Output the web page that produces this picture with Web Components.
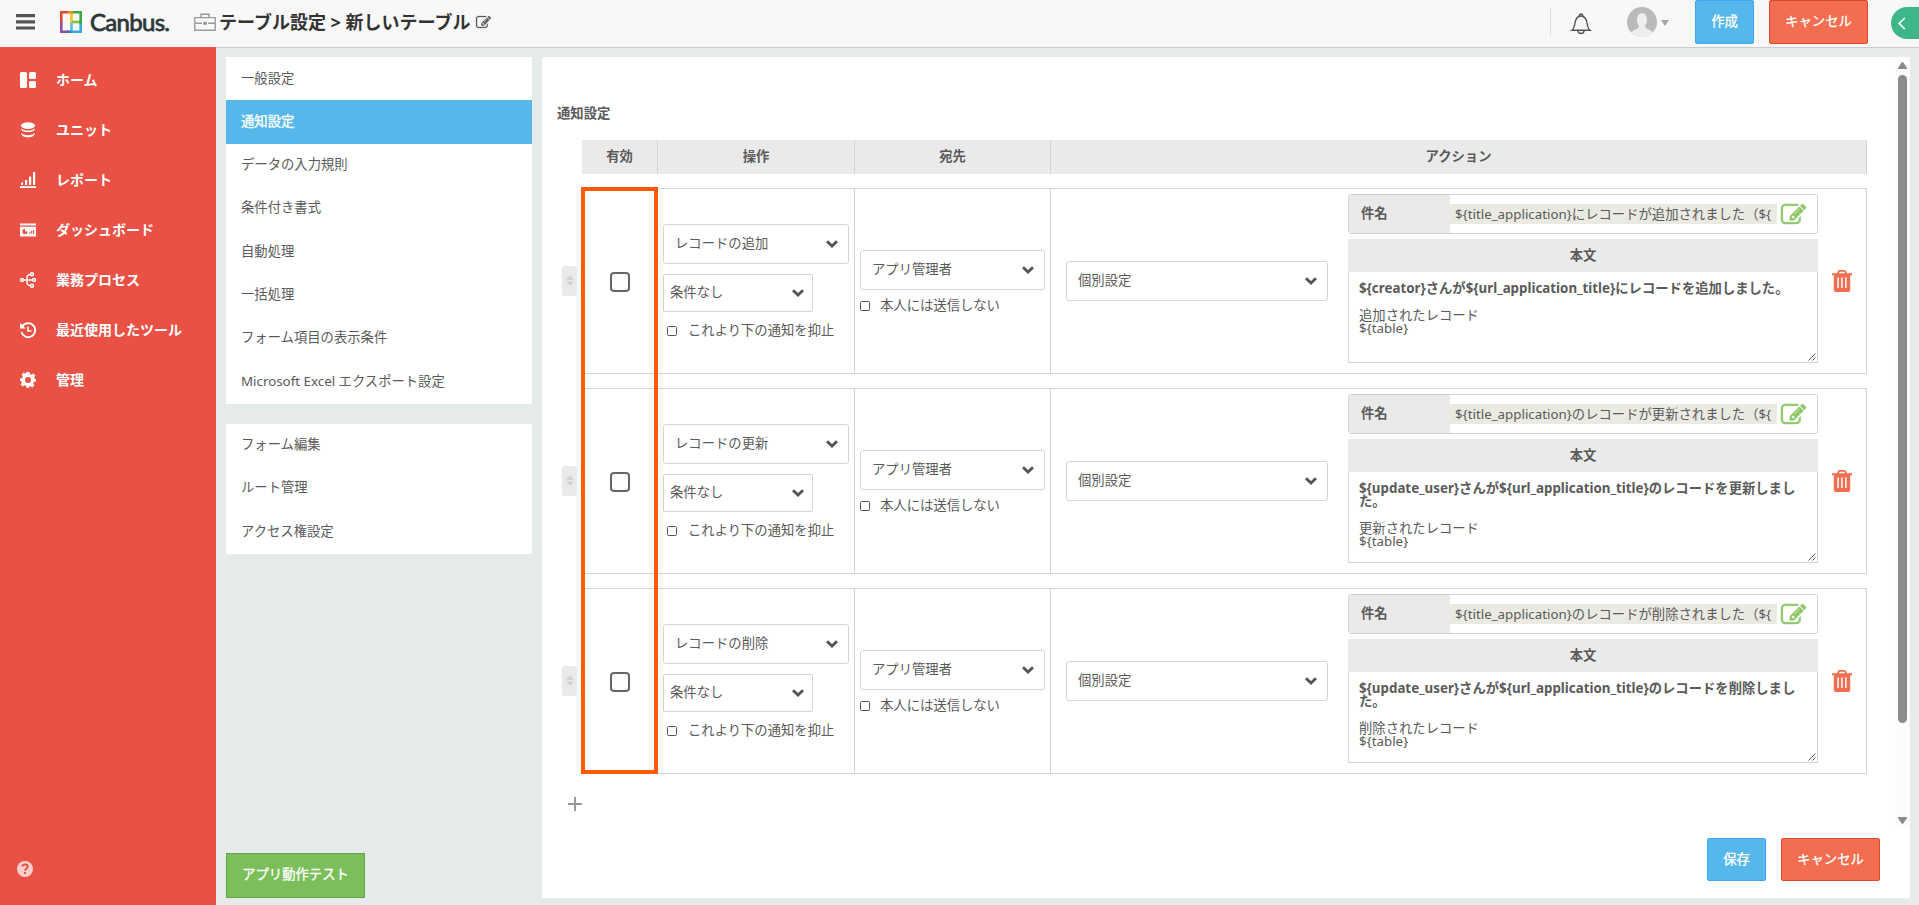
<!DOCTYPE html>
<html lang="ja">
<head>
<meta charset="utf-8">
<title>テーブル設定 - Canbus.</title>
<style>
  html, body { height: 100%; margin: 0; }
  body {
    --color-red: #e95145;
    --color-blue: #55b7ea;
    --color-blue-border: #3ea6f2;
    --color-orange: #f36d50;
    --color-orange-border: #dc4c2c;
    --color-green: #7bbf5a;
    --color-border: #d3d3d3;
    --color-gray: #eaeaea;
    --color-bg: #e5ebea;
    overflow: hidden;
    color: #5a5a5a;
    font-family: "Noto Sans", "Noto Sans CJK JP", sans-serif;
    font-size: 13.333px;
    line-height: 1;
  }
</style>
</head>
<body>
<canbus-app></canbus-app>

<script>
const icons = {
  menu: ['0 0 19 16', '<path fill="#555" d="M0 0h19v3.2H0zM0 6.2h19v3.2H0zM0 12.4h19v3.2H0z"/>'],
  logo: ['0 0 22 22', `
    <g fill="none" stroke-width="2.6">
      <path stroke="#59b9e6" d="M11.500 11v9.500"/>
      <path stroke="#f3c220" d="M11.500 1.300V12"/>
      <path stroke="#84c241" d="M12 11h8"/>
      <path stroke="#e8452f" d="M1.300 12V1.300H9"/>
      <path stroke="#f08a24" d="M8 1.300h5"/>
      <path stroke="#8c4fa0" d="M1.300 11v9.700H8"/>
      <path stroke="#4a6fc0" d="M7 20.700h5"/>
      <path stroke="#37a9e0" d="M11 20.700h9.700V12"/>
      <path stroke="#3aa845" d="M13 1.300h7.700V13"/>
    </g>`],
  toolbox: ['0 0 22 18', `
    <g fill="none" stroke="#999" stroke-width="1.4">
      <path d="M7 4V1.2h8V4M.8 10V4.6h20.4V10M.8 10.2V17.300h20.400v-7.100M.8 10.200H8M14 10.200h7.200"/>
    </g><path fill="#999" d="M9.300 8.800h3.600v3H9.300z"/>`],
  pencilbox: ['0 0 1792 1408', '<path fill="currentColor" stroke="currentColor" stroke-width="30" d="M888 1056l116-116-152-152-116 116v56h96v96h56zm440-720q-16-16-33 1L945 687q-17 17-1 33t33-1l350-350q17-17 1-33zm80 594v190q0 119-84.500 203.500T1120 1408H288q-119 0-203.500-84.500T0 1120V288Q0 169 84.500 84.500T288 0h832q63 0 117 25 15 7 18 23 3 17-9 29l-49 49q-14 14-32 8-23-6-45-6H288q-66 0-113 47t-47 113v832q0 66 47 113t113 47h832q66 0 113-47t47-113V994q0-13 9-22l64-64q15-15 35-7t20 29zM1312 192l288 288-672 672H640V864zm444 132l-92 92-288-288 92-92q28-28 68-28t68 28l152 152q28 28 28 68t-28 68z"/>'],
  bell: ['0 0 20 22', '<g fill="none" stroke="#555" stroke-width="1.400"><path d="M.9 17.300C3 15.700 3.400 13.500 3.900 10.500 4.500 6.300 6.500 3 10 3s5.500 3.300 6.100 7.500c.5 3 .9 5.200 3 6.800z"/><path d="M8.300 3c0-2.600 3.400-2.600 3.400 0M6.900 17.500c0 4 6.200 4 6.200 0"/></g>'],
  avatar: ['0 0 30 30', '<circle cx="15" cy="15" r="15" fill="#bababa"/><path fill="#eee" d="M4.500 25.700c1-3 6.500-3.600 7.200-5.200.300-.8 0-2.300-.7-3.500-1.500-2.500-2.100-10.700 4-10.700s5.500 8.200 4 10.700c-.7 1.200-1 2.700-.7 3.500.7 1.600 6.200 2.200 7.200 5.200a15 15 0 0 1-21 0z"/>'],
  caret: ['0 0 8 6', '<path fill="#a5a5a5" d="M0 0h8L4 6z"/>'],
  back: ['0 0 8 13', '<path fill="none" stroke="#fff" stroke-width="1.600" d="M6.800 1L1.200 6.500 6.800 12"/>'],
  home: ['0 0 16 16', '<g fill="#fff"><rect width="7" height="16" rx="1.500"/><rect x="9" width="7" height="7" rx="1.500"/><rect x="9" y="9" width="7" height="7" rx="1.500"/></g>'],
  unit: ['0 0 16 16', '<g fill="#fff"><ellipse cx="8" cy="3.600" rx="7" ry="3.400"/><path d="M1 6.200c2.500 3.200 11.500 3.200 14 0 .2 5.200-14.200 5.200-14 0zM1 10.800c2.500 3.200 11.500 3.200 14 0 .2 6.200-14.200 6.200-14 0z"/></g>'],
  report: ['0 0 16 16', '<path fill="#fff" d="M0 14.200h16V16H0zM1 10.500h2.200V13H1zM5 8h2.200v5H5zM9 4.500h2.200V13H9zM13 0h2.200v13H13z"/>'],
  dashboard: ['0 0 16 16', '<path fill="#fff" d="M0 1.500h16v2H0zM0 4.800h16V14.500H0z"/><g fill="#e95145"><path d="M5 6.800a2.600 2.600 0 1 0 2.600 2.600H5z"/><path d="M9.300 9.700h1.100v2H9.300zM11.100 8.700h1.100v3h-1.100zM13 8h1.100v3.700H13z"/></g>'],
  process: ['0 0 16 16', '<g fill="none" stroke="#fff" stroke-width="1.500"><circle cx="2" cy="8" r="1.400"/><circle cx="12" cy="2.200" r="1.500"/><circle cx="14" cy="8" r="1.400"/><circle cx="12" cy="13.800" r="1.500"/><path d="M3.500 8h9M10.500 2.500C7 2.500 7 4 7 8s0 5.500 3.500 5.500"/></g>'],
  history: ['0 0 16 16', '<g fill="none" stroke="#fff" stroke-width="1.900"><path d="M2.200 4.500A7 7 0 1 1 1.400 10"/><path stroke-width="1.600" d="M8 4.500V9h3.500"/></g><path fill="#fff" d="M0 .8v5.700h5.700z"/>'],
  gear: ['0 0 16 16', '<path fill="#fff" fill-rule="evenodd" d="M6.500 0h3l.5 2.200 1.400.6 1.900-1.200 2.100 2.100-1.200 1.900.6 1.400L16 7v2.500l-2.200.500-.6 1.400 1.200 1.900-2.100 2.100-1.900-1.200-1.400.6L8.500 16h-2L6 13.800l-1.400-.6-1.900 1.200L.6 12.300l1.200-1.900L1.200 9 0 8.800V6.500L2.200 6l.6-1.400L1.600 2.700 3.700.6l1.900 1.200zM8 5a3 3 0 1 0 0 6 3 3 0 0 0 0-6z"/>'],
  help: ['0 0 16 16', '<circle cx="8" cy="8" r="8" fill="#fbd0cc"/><path fill="none" stroke="#e95145" stroke-width="2" d="M5.300 5.500c.3-2.600 5.400-2.500 5.400.2C10.700 7.500 8 7.600 8 9.700"/><path fill="#e95145" d="M7 11h2v2H7z"/>'],
  chevron: ['0 0 12 8', '<path fill="none" stroke="#555" stroke-width="2.900" d="M1 1.300l5 4.700 5-4.700"/>'],
  sort: ['0 0 8 12', '<path fill="#d3d3d3" d="M0 5h8L4 .600zM0 6.500h8L4 11z"/>'],
  trash: ['0 0 20 22', '<path fill="#f36d50" fill-rule="evenodd" d="M5 3.300L6 1q.4-1 1.500-1h5Q13.600 0 14 1l1 2.300h5v1.900h-1.800V19.500q0 2.500-2 2.500H3.800q-2 0-2-2.500V5.200H0V3.300zm2 0h6l-.7-1.500H7.700zM5.300 7.500V18h1.500V7.500zm3.900 0V18h1.500V7.500zm3.900 0V18h1.500V7.500z"/>'],
  plus: ['0 0 14 14', '<path fill="#999" d="M6 0h2v6h6v2H8v6H6V8H0V6h6z"/>'],
  grip: ['0 0 8 8', '<path stroke="#555" stroke-width="1" d="M.5 7.500l7-7M4.500 7.500l3-3"/>'],
  up: ['0 0 9 7', '<path fill="#8b8b8b" d="M4.500 0q.5 0 1 .7L9 6v1H0V6L3.500.7q.5-.7 1-.7z"/>'],
  down: ['0 0 9 7', '<path fill="#8b8b8b" d="M4.500 7q-.5 0-1-.7L0 1V0h9v1L5.500 6.300q-.5.7-1 .7z"/>'],
};

/* Attaches an open root and fills it from a template */
class BaseElement extends HTMLElement {
  constructor() {
    super();
    this.attachShadow({ mode: 'open' });
  }

  connectedCallback() {
    const tpl = document.createElement('template');
    tpl.innerHTML = `<style>* { box-sizing: border-box; }</style>${this.render()}`;
    this.shadowRoot.replaceChildren(tpl.content.cloneNode(true));
  }

  attr(name, fallback = '') {
    return this.getAttribute(name) ?? fallback;
  }
}

/* <cb-icon name w h> */
class CbIcon extends BaseElement {
  render() {
    const [viewBox, body] = icons[this.attr('name')];
    return `
      <style>
        :host { display: block; flex: none; width: ${this.attr('w')}px; height: ${this.attr('h')}px; }
        svg { display: block; width: 100%; height: 100%; overflow: visible; }
      </style>
      <svg viewBox="${viewBox}" preserveAspectRatio="none">${body}</svg>
    `;
  }
}

/* <cb-button kind="primary | danger | test"> */
class CbButton extends BaseElement {
  render() {
    return `
      <style>
        :host { display: block; flex: none; }
        button {
          display: block;
          width: 59px;
          height: 43px;
          padding: 0;
          border: 1px solid var(--color-blue-border);
          border-radius: 2px;
          background: var(--color-blue);
          color: #fff;
          font: inherit;
          -webkit-text-stroke: .3px #fff;
        }
        :host([tall]) button { height: 44px; }
        :host([kind=danger]) button {
          width: 99px;
          border-color: var(--color-orange-border);
          background: var(--color-orange);
        }
        :host([kind=test]) button {
          width: 139px;
          height: 45px;
          padding-bottom: 2px;
          border-color: #62a544;
          border-radius: 0;
          background: var(--color-green);
        }
      </style>
      <button><slot></slot></button>
    `;
  }
}

class CbSelect extends BaseElement {
  render() {
    return `
      <style>
        :host {
          display: flex;
          align-items: center;
          justify-content: space-between;
          box-sizing: border-box;
          height: 40px;
          padding: 0 10.500px 0 11px;
          border: 1px solid var(--color-border);
          border-radius: 3px;
          background: #fff;
        }
        :host([small]) { width: 150px; height: 38px; padding: 0 8.500px 0 6px; border-radius: 2px; }
      </style>
      <slot></slot>
      <cb-icon name="chevron" w="12" h="8"></cb-icon>
    `;
  }
}

class CbCheck extends BaseElement {
  render() {
    return `
      <style>
        :host { display: flex; align-items: center; gap: 10px; height: 18px; white-space: nowrap; }
        i { width: 10px; height: 10px; border: 1px solid #555; border-radius: 1.500px; }
        :host([large]) i { width: 20px; height: 20px; border: 2px solid #666; border-radius: 4px; }
      </style>
      <i></i><slot></slot>
    `;
  }
}

class AppHeader extends BaseElement {
  render() {
    return `
      <style>
        :host { display: flex; height: 47px; background: #f8f8f8; }
        .left { display: flex; align-items: center; flex: 1; height: 44px; padding-left: 16px; }
        .logo { display: flex; align-items: center; gap: 8px; margin: 0 25px; }
        .brand {
          width: 79px;
          color: #2d383b;
          font: 24px/30px Lato, sans-serif;
          letter-spacing: -.7px;
          -webkit-text-stroke: .8px #2d383b;
          white-space: nowrap;
        }
        h1 { margin: 0 5px 0 3px; color: #333; font-size: 18px; font-weight: 700; line-height: 24px; white-space: nowrap; }
        .right { display: flex; align-items: flex-start; }
        .sep { width: 1px; height: 28px; margin: 8px 20px 0 0; background: #ddd; }
        .bell { margin: 13px 36px 0 0; }
        .avatar { margin: 7px 4px 0 0; }
        .caret { margin: 20px 26px 0 0; }
        cb-button + cb-button { margin: 0 23px 0 15px; }
        .tab {
          display: flex;
          align-items: center;
          width: 28px;
          height: 32px;
          margin-top: 7px;
          padding-left: 7px;
          border-radius: 16px 0 0 16px;
          background: #3db788;
        }
      </style>
      <div class="left">
        <cb-icon name="menu" w="19" h="16"></cb-icon>
        <div class="logo"><cb-icon name="logo" w="22" h="22"></cb-icon><span class="brand">Canbus.</span></div>
        <cb-icon name="toolbox" w="22" h="18"></cb-icon>
        <h1>テーブル設定 &gt; 新しいテーブル</h1>
        <cb-icon name="pencilbox" w="15" h="12"></cb-icon>
      </div>
      <div class="right">
        <div class="sep"></div>
        <cb-icon class="bell" name="bell" w="20" h="22"></cb-icon>
        <cb-icon class="avatar" name="avatar" w="30" h="30"></cb-icon>
        <cb-icon class="caret" name="caret" w="8" h="6"></cb-icon>
        <cb-button tall>作成</cb-button>
        <cb-button tall kind="danger">キャンセル</cb-button>
        <div class="tab"><cb-icon name="back" w="8" h="13"></cb-icon></div>
      </div>
    `;
  }
}

class NavItem extends BaseElement {
  render() {
    return `
      <style>
        :host { display: flex; align-items: center; gap: 20px; height: 50px; padding-left: 20px; white-space: nowrap; }
      </style>
      <cb-icon name="${this.attr('icon')}" w="16" h="16"></cb-icon><slot></slot>
    `;
  }
}

class SideNav extends BaseElement {
  render() {
    return `
      <style>
        :host {
          display: flex;
          flex-direction: column;
          flex: none;
          box-sizing: border-box;
          width: 216px;
          padding: 8px 0 28px;
          background: var(--color-red);
          color: #fff;
          font-size: 14px;
          font-weight: 700;
        }
        .help { margin: auto 0 0 17px; }
      </style>
      <slot></slot>
      <cb-icon class="help" name="help" w="16" h="16"></cb-icon>
    `;
  }
}

class MenuItem extends BaseElement {
  render() {
    return `
      <style>
        :host { display: block; padding: 14.500px 15px 15.500px; line-height: 13.333px; white-space: nowrap; }
        :host([active]) { background: var(--color-blue); color: #fff; -webkit-text-stroke: .35px #fff; }
      </style>
      <slot></slot>
    `;
  }
}

class MenuPanel extends BaseElement {
  render() {
    return `
      <style>
        :host { display: block; margin-bottom: 20px; background: #fff; }
      </style>
      <slot></slot>
    `;
  }
}

/* One notification rule */
class NotifyRow extends BaseElement {
  render() {
    return `
      <style>
        :host { display: flex; align-items: center; gap: 5px; height: 186px; }
        .handle {
          display: flex;
          align-items: center;
          justify-content: center;
          width: 15px;
          height: 30px;
          border-radius: 3px;
          background: var(--color-gray);
        }
        .row {
          display: grid;
          grid-template-columns: 75px 197px 196px 816px;
          height: 186px;
          border: 1px solid var(--color-border);
          border-width: 1px 0 1px 1px;
        }
        .cell { display: flex; flex-direction: column; justify-content: center; border-right: 1px solid var(--color-border); }
        .enable { align-items: center; padding: 2px 0 0; }
        .target { padding: 3px 5px 0 5px; gap: 7px; }
        .operation { padding: 2px 5px 0 5px; gap: 10px; }
        .operation cb-check { padding-left: 4px; gap: 11px; }
        .action { flex-direction: row; align-items: center; justify-content: flex-start; padding-left: 15px; }
        .action cb-select { width: 262px; margin-right: 20px; }
        .mail { align-self: flex-start; width: 470px; margin: 5px 14px 0 0; }
        .subject {
          display: flex;
          align-items: center;
          height: 40px;
          margin-bottom: 5px;
          border: 1px solid var(--color-border);
          border-radius: 3px;
        }
        .subject b { width: 101px; height: 38px; padding-left: 12px; background: var(--color-gray); line-height: 37px; }
        .value { width: 327px; height: 20px; margin-right: 4px; padding: 0 5px; background: #eaeae2; line-height: 20px; }
        .value span { display: block; overflow: hidden; white-space: nowrap; }
        .subject cb-icon { color: #8cc665; }
        .head { height: 33px; background: var(--color-gray); line-height: 32px; text-align: center; font-weight: 700; }
        .body {
          position: relative;
          height: 91px;
          padding: 10px 10px 0;
          border: 1px solid var(--color-border);
          border-top: 0;
          line-height: 13.333px;
        }
        .body strong { display: block; margin-bottom: 13.333px; font-weight: 700; }
        .grip { position: absolute; right: 1px; bottom: 1px; }
      </style>
      <div class="handle"><cb-icon name="sort" w="8" h="12"></cb-icon></div>
      <div class="row">
        <div class="cell enable"><cb-check large></cb-check></div>
        <div class="cell operation">
          <cb-select>レコードの${this.attr('verb')}</cb-select>
          <cb-select small>条件なし</cb-select>
          <cb-check>これより下の通知を抑止</cb-check>
        </div>
        <div class="cell target">
          <cb-select>アプリ管理者</cb-select>
          <cb-check>本人には送信しない</cb-check>
        </div>
        <div class="cell action">
          <cb-select>個別設定</cb-select>
          <div class="mail">
            <div class="subject">
              <b>件名</b>
              <div class="value"><span>${this.attr('subject')}</span></div>
              <cb-icon name="pencilbox" w="25" h="20"></cb-icon>
            </div>
            <div class="head">本文</div>
            <div class="body">
              <strong><slot></slot></strong>
              ${this.attr('verb')}されたレコード<br>\${table}
              <cb-icon class="grip" name="grip" w="8" h="8"></cb-icon>
            </div>
          </div>
          <cb-icon name="trash" w="20" h="22"></cb-icon>
        </div>
      </div>
    `;
  }
}

class NotifyTable extends BaseElement {
  render() {
    return `
      <style>
        :host { display: block; position: relative; width: 1305px; margin-left: 20px; }
        .head {
          display: grid;
          grid-template-columns: 76px 197px 196px 816px;
          height: 34px;
          margin: 0 0 14px 20px;
          background: var(--color-gray);
          font-weight: 700;
          line-height: 32px;
          text-align: center;
        }
        .head span { border-right: 1px solid var(--color-border); }
        .rows { display: flex; flex-direction: column; gap: 14px; }
        .plus { margin: 23px 0 0 6px; }
        /* callout frame over the first column */
        .frame { position: absolute; left: 19px; top: 47px; width: 77px; height: 587px; border: 4px solid #ff5a00; }
      </style>
      <div class="head"><span>有効</span><span>操作</span><span>宛先</span><span>アクション</span></div>
      <div class="rows"><slot></slot></div>
      <cb-icon class="plus" name="plus" w="14" h="14"></cb-icon>
      <div class="frame"></div>
    `;
  }
}

class ScrollRail extends BaseElement {
  render() {
    return `
      <style>
        :host {
          display: flex;
          flex-direction: column;
          align-items: center;
          box-sizing: border-box;
          width: 15px;
          height: 770px;
          padding: 5px 0 3px;
          background: #fcfcfc;
        }
        .thumb { width: 9px; height: 648px; margin: 6px 0 auto; border-radius: 5px; background: #8b8b8b; }
      </style>
      <cb-icon name="up" w="9" h="7"></cb-icon>
      <div class="thumb"></div>
      <cb-icon name="down" w="9" h="7"></cb-icon>
    `;
  }
}

class SettingsPanel extends BaseElement {
  render() {
    return `
      <style>
        :host { display: flex; flex-direction: column; width: 1368px; height: 841px; background: #fff; }
        .scroll { display: flex; justify-content: space-between; height: 770px; }
        h2 { margin: 49px 0 20px 15px; font-size: inherit; font-weight: 700; line-height: 14px; }
        .footer { display: flex; gap: 15px; margin: 11px 30px 0 auto; }
      </style>
      <div class="scroll">
        <div>
          <h2>通知設定</h2>
          <slot></slot>
        </div>
        <scroll-rail></scroll-rail>
      </div>
      <div class="footer">
        <cb-button>保存</cb-button>
        <cb-button kind="danger">キャンセル</cb-button>
      </div>
    `;
  }
}

class CanbusApp extends BaseElement {
  render() {
    return `
      <style>
        :host { display: flex; flex-direction: column; height: 100vh; }
        .page { display: flex; flex: 1; }
        .main { display: flex; flex: 1; gap: 10px; padding: 9px 9px 7px 10px; border-top: 1px solid #ccc; background: var(--color-bg); }
        .menus { display: flex; flex-direction: column; width: 306px; }
        .menus cb-button { margin-top: auto; }
      </style>
      <app-header></app-header>
      <div class="page">
        <side-nav>
          <nav-item icon="home">ホーム</nav-item>
          <nav-item icon="unit">ユニット</nav-item>
          <nav-item icon="report">レポート</nav-item>
          <nav-item icon="dashboard">ダッシュボード</nav-item>
          <nav-item icon="process">業務プロセス</nav-item>
          <nav-item icon="history">最近使用したツール</nav-item>
          <nav-item icon="gear">管理</nav-item>
        </side-nav>
        <div class="main">
          <div class="menus">
            <menu-panel>
              <menu-item>一般設定</menu-item>
              <menu-item active>通知設定</menu-item>
              <menu-item>データの入力規則</menu-item>
              <menu-item>条件付き書式</menu-item>
              <menu-item>自動処理</menu-item>
              <menu-item>一括処理</menu-item>
              <menu-item>フォーム項目の表示条件</menu-item>
              <menu-item>Microsoft Excel エクスポート設定</menu-item>
            </menu-panel>
            <menu-panel>
              <menu-item>フォーム編集</menu-item>
              <menu-item>ルート管理</menu-item>
              <menu-item>アクセス権設定</menu-item>
            </menu-panel>
            <cb-button kind="test">アプリ動作テスト</cb-button>
          </div>
          <settings-panel>
            <notify-table>
              <notify-row verb="追加" subject="\${title_application}にレコードが追加されました（\${">\${creator}さんが\${url_application_title}にレコードを追加しました。</notify-row>
              <notify-row verb="更新" subject="\${title_application}のレコードが更新されました（\${">\${update_user}さんが\${url_application_title}のレコードを更新しました。</notify-row>
              <notify-row verb="削除" subject="\${title_application}のレコードが削除されました（\${">\${update_user}さんが\${url_application_title}のレコードを削除しました。</notify-row>
            </notify-table>
          </settings-panel>
        </div>
      </div>
    `;
  }
}

customElements.define('cb-icon', CbIcon);
customElements.define('cb-button', CbButton);
customElements.define('cb-select', CbSelect);
customElements.define('cb-check', CbCheck);
customElements.define('app-header', AppHeader);
customElements.define('nav-item', NavItem);
customElements.define('side-nav', SideNav);
customElements.define('menu-item', MenuItem);
customElements.define('menu-panel', MenuPanel);
customElements.define('notify-row', NotifyRow);
customElements.define('notify-table', NotifyTable);
customElements.define('scroll-rail', ScrollRail);
customElements.define('settings-panel', SettingsPanel);
customElements.define('canbus-app', CanbusApp);
</script>
</body>
</html>
